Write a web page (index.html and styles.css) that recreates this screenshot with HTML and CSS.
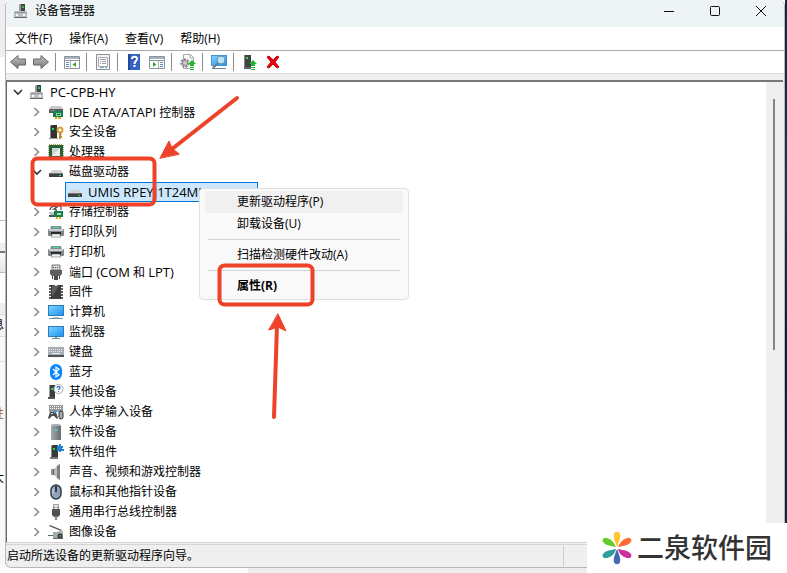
FILE: index.html
```html
<!DOCTYPE html>
<html lang="zh-CN">
<head>
  <meta charset="utf-8">
  <title>设备管理器</title>
  <link rel="stylesheet" href="styles.css">
</head>
<body>
  <!-- icon sprite, 16x16 grid -->
  <svg class="sprite" aria-hidden="true">
    <defs>
      <linearGradient id="g-screen" x1="0" y1="0" x2="1" y2="1"><stop offset="0" stop-color="#7fd0ff"/><stop offset="1" stop-color="#1e96f0"/></linearGradient>
      <linearGradient id="g-gray" x1="0" y1="0" x2="0" y2="1"><stop offset="0" stop-color="#c4c4c4"/><stop offset="1" stop-color="#767676"/></linearGradient>
      <linearGradient id="g-metal" x1="0" y1="0" x2="1" y2="0"><stop offset="0" stop-color="#a4a9ad"/><stop offset="1" stop-color="#666c70"/></linearGradient>
    </defs>
    <symbol id="i-down" viewBox="0 0 16 16"><path d="M4 6l4 4 4-4" fill="none" stroke="#333" stroke-width="1.6"/></symbol>
    <symbol id="i-right" viewBox="0 0 16 16"><path d="M5.500 4l4 4-4 4" fill="none" stroke="#888" stroke-width="1.5"/></symbol>
    <symbol id="i-computer" viewBox="0 0 16 16">
      <path d="M6 2l2-1h4v8H6z" fill="#444"/><path d="M6 2l2-1v8H6z" fill="#999"/><path d="M9 3h2v2H9z" fill="#19d13a"/>
      <path d="M2 8h11l1 2v5H1v-5z" fill="#b9bcc0"/><path d="M1 9h13v1H1z" fill="#999"/><path d="M3 11h2v2H3zM10 11h2v2h-2z" fill="#fff"/><path d="M1 14h13v1H1z" fill="#666"/>
    </symbol>
    <symbol id="i-ide" viewBox="0 0 16 16">
      <path d="M3 2h10l2 3H1z" fill="#c6c8ca"/><path d="M1 5h14v4H1z" fill="#5a5d60"/><path d="M2 6h5v1H2z" fill="#888"/>
      <path d="M5 7h10v6H5z" fill="#16804b"/><path d="M8 9h5v3H8z" fill="#92d7ad"/><path d="M9 10h3v1H9z" fill="#14512e"/><path d="M7 13h2v2H7zM10 13h3v2h-3z" fill="#e5a923"/>
    </symbol>
    <symbol id="i-security" viewBox="0 0 16 16">
      <path d="M2 2l2-1h5v13H2z" fill="#333"/><path d="M2 2l1-1v13H2z" fill="#888"/><path d="M4 4h2v2H4z" fill="#1ee04a"/><path d="M1 14h9v1H1z" fill="#999"/>
      <circle cx="12" cy="6" r="2.500" fill="none" stroke="#d5a13b" stroke-width="2"/><path d="M11 8h2v7h-2zM13 10h1v1h-1zM13 12h1v2h-1z" fill="#c58d29"/>
    </symbol>
    <symbol id="i-cpu" viewBox="0 0 16 16">
      <path d="M1 1h14v14H1z" fill="none" stroke="#b99b3c" stroke-width="2" stroke-dasharray="1 1"/><path d="M1 1h14v14H1z" fill="#236440"/><path d="M4 4h8v8H4z" fill="#cdd3d0"/><path d="M4 12l8-8v8z" fill="#eef0ef"/>
    </symbol>
    <symbol id="i-disk" viewBox="0 0 16 16">
      <path d="M4 6h9l2 3H2z" fill="#d2d3d4"/><path d="M1 9h14v4H1z" fill="#3f4143"/><path d="M1 9h14v1H1z" fill="#777"/><path d="M11 11h2v1h-2z" fill="#26e055"/>
    </symbol>
    <symbol id="i-storage" viewBox="0 0 16 16">
      <path d="M2 6c0-3 4-5 7-3L6 5c3 0 3 3 0 4" fill="none" stroke="#555" stroke-width="1.500"/><path d="M9 2h4v4" fill="none" stroke="#777" stroke-width="1.500"/>
      <path d="M1 8h7l1 4H2z" fill="#bfc2c4"/><path d="M1 11h6v2H1z" fill="#555"/>
      <path d="M6 7h9v6H6z" fill="#16804b"/><path d="M9 9h4v2H9z" fill="#a5debb"/><path d="M8 13h2v2H8zM11 13h2v2h-2z" fill="#e5a923"/>
    </symbol>
    <symbol id="i-printer" viewBox="0 0 16 16">
      <path d="M3 2h10l1 4H2z" fill="#858b90"/><path d="M5 3h6v1H5z" fill="#3ee2a5"/><rect x="0" y="5" width="16" height="7" rx="1" fill="#7e858b"/><path d="M1 5h14v2H1z" fill="#c7ccd0"/>
      <path d="M3 8h10v3H3z" fill="#242628"/><path d="M4 10h8l1 3H3z" fill="#f2f3f4" stroke="#555" stroke-width=".5"/>
    </symbol>
    <symbol id="i-port" viewBox="0 0 16 16">
      <path d="M4 1h8v5H4z" fill="#d8d8d8" stroke="#777"/><path d="M5 3h1v1H5zM7 3h1v1H7zM9 3h1v1H9z" fill="#555"/><path d="M2 6h12v4l-2 2H4l-2-2z" fill="#5e6062"/><path d="M4 12h1v3H4zM6 12h4v4H6zM11 12h1v3h-1z" fill="#4a4c4e"/>
    </symbol>
    <symbol id="i-firmware" viewBox="0 0 16 16">
      <path d="M2 1v14M14 1v14" stroke="#5b5b5b" stroke-width="2" stroke-dasharray="2 1"/><path d="M3 1h3l2 1 2-1h3v14H3z" fill="#3c3e40"/><path d="M4 2h7L4 12z" fill="#5d6062"/>
    </symbol>
    <symbol id="i-pc" viewBox="0 0 16 16"><path d="M0 1h16v11H0z" fill="#2c7cba"/><path d="M1 2h14v9H1z" fill="url(#g-screen)"/><path d="M5 13h6v1H5z" fill="#bbb"/><path d="M1 14h14v1H1z" fill="#7796a6"/></symbol>
    <symbol id="i-monitor" viewBox="0 0 16 16"><path d="M0 2h16v11H0z" fill="#2c7cba"/><path d="M1 3h14v9H1z" fill="url(#g-screen)"/><path d="M7 13h2v1H7zM4 14h8v1H4z" fill="#6f93a8"/></symbol>
    <symbol id="i-keyboard" viewBox="0 0 16 16">
      <path d="M0 3h16v8H0z" fill="#a6acb1"/><path d="M1 5.500h14M1 7.500h14" stroke="#eef0f1" stroke-dasharray="1 1"/><path d="M4 9h8v1H4z" fill="#eef0f1"/><path d="M0 11h16v2H0z" fill="#4f5356"/>
    </symbol>
    <symbol id="i-bluetooth" viewBox="0 0 16 16"><rect x="2" y="0" width="12" height="16" rx="6" fill="#0a84ff"/><path d="M5 5l6 6-3 2V3l3 2-6 6" fill="none" stroke="#fff" stroke-width="1.200"/></symbol>
    <symbol id="i-other" viewBox="0 0 16 16">
      <path d="M1 2l1-1h5v12H1z" fill="#3b3d3f"/><path d="M1 2l1-1v12H1z" fill="#999"/><path d="M3 4h2v2H3z" fill="#1ee04a"/><path d="M0 13h7v2H0z" fill="#555"/>
      <circle cx="10.500" cy="5" r="4.500" fill="#fff" stroke="#aaa"/><path d="M9 4c0-2 3-2 3 0 0 1-1.500 1-1.500 2" fill="none" stroke="#2676c8" stroke-width="1.300"/><path d="M10 7h1v1h-1z" fill="#2676c8"/>
    </symbol>
    <symbol id="i-hid" viewBox="0 0 16 16">
      <path d="M1 1h14v7H1z" fill="#969a9e"/><path d="M2 2.500h12M2 4.500h12" stroke="#fff" stroke-dasharray="1 1"/>
      <path d="M0 14l2-6h6l2 6-1 1-3-3H4l-3 3z" fill="#4a4e53"/><path d="M3 9h2v1H3z" fill="#ddd"/><path d="M6 6h2v3H6z" fill="#2a9de5"/><rect x="11" y="7" width="4" height="8" rx="2" fill="#a4a9ae" stroke="#333"/>
    </symbol>
    <symbol id="i-software" viewBox="0 0 16 16"><path d="M3 2l1-1h8l1 1v14H3z" fill="url(#g-metal)"/><path d="M4 0h8l1 2H3z" fill="#aeb5ba"/><path d="M7 5h2v2H7z" fill="#3bd5e8"/></symbol>
    <symbol id="i-component" viewBox="0 0 16 16">
      <path d="M3 2l2-1h5v12H3z" fill="#38393b"/><path d="M3 2l1-1v12H3z" fill="#888"/><path d="M5 4h2v2H5z" fill="#1ee04a"/><path d="M2 13h8v2H2z" fill="#777"/>
      <path d="M9 2h2V0h2v2h2v2h-1v1h2v2h-3v1h-2V7H9z" fill="#1f83d2"/>
    </symbol>
    <symbol id="i-sound" viewBox="0 0 16 16"><path d="M3 5h3v6H3z" fill="#999"/><path d="M6 5l5-5v16l-5-5z" fill="#b9bdc0"/><path d="M9 2l3-2v16l-3-2z" fill="#7b8084"/><path d="M5 5h1v6H5z" fill="#555"/></symbol>
    <symbol id="i-mouse" viewBox="0 0 16 16"><rect x="3" y="1" width="10" height="14" rx="5" fill="#8fa3b8" stroke="#333a42" stroke-width="1.500"/><path d="M8 2v6" stroke="#333a42" stroke-width="2"/><path d="M5 5v5" stroke="#dae4ee"/></symbol>
    <symbol id="i-usb" viewBox="0 0 16 16"><path d="M5.500.500h5v5h-5z" fill="#e2e2e2" stroke="#999"/><path d="M6 3h1v1H6zM9 3h1v1H9z" fill="#555"/><path d="M4 5h8v6l-2 2H6l-2-2z" fill="#505255"/><path d="M7 12h2v4H7z" fill="#888"/></symbol>
    <symbol id="i-imaging" viewBox="0 0 16 16">
      <path d="M2 1l12 5-1 1L1 2z" fill="#555"/><path d="M6 9l8-3 1 2-5 2z" fill="#bbb"/><path d="M5 8h10v7H5z" fill="#a6aaad"/><path d="M0 11h5v1H0z" fill="#666"/><circle cx="12" cy="12" r="2.500" fill="#333"/><circle cx="12" cy="12" r="1" fill="#48b98b"/><path d="M5 14h10v1H5z" fill="#666"/>
    </symbol>
    <!-- toolbar -->
    <symbol id="i-back" viewBox="0 0 16 16"><path d="M.500 8L8 1.500V5h7.500v6H8v3.500z" fill="url(#g-gray)" stroke="#666"/></symbol>
    <symbol id="i-forward" viewBox="0 0 16 16"><path d="M15.500 8L8 1.500V5H.500v6H8v3.500z" fill="url(#g-gray)" stroke="#666"/></symbol>
    <symbol id="i-tree" viewBox="0 0 16 16">
      <path d="M.500 2.500h15v12H.500z" fill="#fff" stroke="#8b949c"/><path d="M1 3h14v2H1z" fill="#a9b3bc"/><path d="M1 6h14v1H1z" fill="#8b949c"/><path d="M6 7h1v7H6z" fill="#aaa"/><path d="M2 8h3v1H2zM2 10h3v1H2zM2 12h3v1H2z" fill="#5a8abc"/><path d="M12 8v5L8.500 10.500z" fill="#2daa2d"/>
    </symbol>
    <symbol id="i-props" viewBox="0 0 16 16">
      <path d="M1.500.500h13v15h-13z" fill="#f4f4f4" stroke="#8f8f8f"/><path d="M3.500 3.500h9v9h-9z" fill="#fff" stroke="#aaa"/><path d="M5 5h6v1H5zM7 7h4v1H7zM7 9h4v1H7zM5 7h1v1H5zM5 9h1v1H5z" fill="#99a"/><path d="M5 13h4v1H5z" fill="#4bb7da"/><path d="M10 13h2v1h-2z" fill="#999"/>
    </symbol>
    <symbol id="i-help" viewBox="0 0 16 16"><path d="M2 0h12v16H2z" fill="#3761c4"/><path d="M2 0h2v16H2z" fill="#23479d"/><path d="M6 5c0-3 5-3 5 0 0 2-2.500 2-2.500 5" fill="none" stroke="#fff" stroke-width="2"/><path d="M7.500 11h2v2h-2z" fill="#fff"/></symbol>
    <symbol id="i-action" viewBox="0 0 16 16">
      <path d="M.500 2.500h15v12H.500z" fill="#fff" stroke="#8b949c"/><path d="M1 3h14v2H1z" fill="#a9b3bc"/><path d="M1 6h14v1H1z" fill="#8b949c"/><path d="M9 7h1v7H9z" fill="#aaa"/><path d="M11 8h3v1h-3zM11 10h3v1h-3zM11 12h3v1h-3z" fill="#5a8abc"/><path d="M4 8v5l3.500-2.500z" fill="#2daa2d"/>
    </symbol>
    <symbol id="i-update" viewBox="0 0 16 16">
      <path d="M3.500.500h7l3 3v11h-10z" fill="#fafafa" stroke="#aaa"/><path d="M10 0v4h4" fill="none" stroke="#aaa"/><circle cx="5" cy="9" r="3.500" fill="none" stroke="#8a8a8a" stroke-width="2.500" stroke-dasharray="2 1"/><circle cx="5" cy="9" r="2.500" fill="#ccc" stroke="#888"/>
      <path d="M12 6l4 4h-2v6h-4v-6H8z" fill="#21b532"/><path d="M10 12h4v1h-4zM10 14h4v1h-4z" fill="#fff"/>
    </symbol>
    <symbol id="i-scan" viewBox="0 0 16 16">
      <path d="M0 1h16v11H0z" fill="#4a93c9"/><path d="M1 2h14v9H1z" fill="url(#g-screen)"/><path d="M1 14h14v1H1z" fill="#789"/><circle cx="10" cy="6" r="4" fill="#b5e4fa" stroke="#6e8ea3"/><path d="M7 9l-5 5" stroke="#667c8c" stroke-width="2"/>
    </symbol>
    <symbol id="i-install" viewBox="0 0 16 16">
      <path d="M2 1h7v12H2z" fill="#404244"/><path d="M2 1h1v12H2z" fill="#888"/><path d="M4 3h2v2H4z" fill="#1ee04a"/><path d="M2 13h7v2H2z" fill="#666"/><path d="M11 6l4 4h-2v6H9v-6H7z" fill="#21b532"/><path d="M9 12h4v1H9zM9 14h4v1H9z" fill="#fff"/>
    </symbol>
    <symbol id="i-remove" viewBox="0 0 16 16"><path d="M2 3l2-1 4 4 4-4 2 1-4 5 4 5-2 1-4-4-4 4-2-1 4-5z" fill="#e3000f" stroke="#d2000d"/></symbol>
  </svg>

  <div class="desktop">
    <!-- slices of the windows behind -->
    <div class="behind-left" aria-hidden="true">
      <div class="slice slice-top"></div>
      <div class="slice slice-page"></div>
      <div class="slice slice-gap"></div>
      <div class="slice slice-tab"></div>
      <div class="slice slice-page short"></div>
      <div class="slice slice-row"><span>息</span></div>
      <div class="slice slice-row blank"></div>
      <div class="slice slice-text"><span class="warm">性</span></div>
      <div class="slice slice-text"><span>大</span></div>
      <div class="slice slice-rest"></div>
    </div>

    <main class="window">
      <header class="titlebar">
        <svg class="icon"><use href="#i-computer"/></svg>
        <h1>设备管理器</h1>
        <div class="window-buttons">
          <button aria-label="最小化"><svg viewBox="0 0 12 12"><path d="M1 6.500h10"/></svg></button>
          <button aria-label="最大化"><svg viewBox="0 0 12 12"><rect x="1.500" y="1.500" width="9" height="9" rx="1"/></svg></button>
          <button aria-label="关闭"><svg viewBox="0 0 12 12"><path d="M1 1l10 10M11 1L1 11"/></svg></button>
        </div>
      </header>

      <nav class="menubar">
        <button>文件(F)</button>
        <button>操作(A)</button>
        <button>查看(V)</button>
        <button>帮助(H)</button>
      </nav>

      <div class="toolbar">
        <button aria-label="后退"><svg class="icon"><use href="#i-back"/></svg></button>
        <button aria-label="前进"><svg class="icon"><use href="#i-forward"/></svg></button>
        <span class="divider"></span>
        <button aria-label="显示控制台树"><svg class="icon"><use href="#i-tree"/></svg></button>
        <span class="divider"></span>
        <button aria-label="属性"><svg class="icon"><use href="#i-props"/></svg></button>
        <span class="divider"></span>
        <button aria-label="帮助"><svg class="icon"><use href="#i-help"/></svg></button>
        <button aria-label="操作窗格"><svg class="icon"><use href="#i-action"/></svg></button>
        <span class="divider"></span>
        <button aria-label="更新驱动程序"><svg class="icon"><use href="#i-update"/></svg></button>
        <span class="divider"></span>
        <button aria-label="扫描检测硬件改动"><svg class="icon"><use href="#i-scan"/></svg></button>
        <span class="divider"></span>
        <button aria-label="启用设备"><svg class="icon"><use href="#i-install"/></svg></button>
        <button aria-label="卸载设备"><svg class="icon"><use href="#i-remove"/></svg></button>
      </div>

      <div class="pane">
        <ul class="tree">
          <li>
            <div class="row"><button class="toggle" aria-label="折叠"><svg class="icon"><use href="#i-down"/></svg></button><span class="label"><svg class="icon"><use href="#i-computer"/></svg><span class="latin">PC-CPB-HY</span></span></div>
            <ul>
              <li class="row"><button class="toggle" aria-label="展开"><svg class="icon"><use href="#i-right"/></svg></button><span class="label"><svg class="icon"><use href="#i-ide"/></svg><span><span class="latin">IDE ATA/ATAPI</span> 控制器</span></span></li>
              <li class="row"><button class="toggle" aria-label="展开"><svg class="icon"><use href="#i-right"/></svg></button><span class="label"><svg class="icon"><use href="#i-security"/></svg>安全设备</span></li>
              <li class="row"><button class="toggle" aria-label="展开"><svg class="icon"><use href="#i-right"/></svg></button><span class="label"><svg class="icon"><use href="#i-cpu"/></svg>处理器</span></li>
              <li>
                <div class="row"><button class="toggle" aria-label="折叠"><svg class="icon"><use href="#i-down"/></svg></button><span class="label"><svg class="icon"><use href="#i-disk"/></svg>磁盘驱动器</span></div>
                <ul>
                  <li class="row leaf"><span class="label selected"><svg class="icon"><use href="#i-disk"/></svg><span class="latin">UMIS RPEYJ1T24MLDAVWG</span></span></li>
                </ul>
              </li>
              <li class="row"><button class="toggle" aria-label="展开"><svg class="icon"><use href="#i-right"/></svg></button><span class="label"><svg class="icon"><use href="#i-storage"/></svg>存储控制器</span></li>
              <li class="row"><button class="toggle" aria-label="展开"><svg class="icon"><use href="#i-right"/></svg></button><span class="label"><svg class="icon"><use href="#i-printer"/></svg>打印队列</span></li>
              <li class="row"><button class="toggle" aria-label="展开"><svg class="icon"><use href="#i-right"/></svg></button><span class="label"><svg class="icon"><use href="#i-printer"/></svg>打印机</span></li>
              <li class="row"><button class="toggle" aria-label="展开"><svg class="icon"><use href="#i-right"/></svg></button><span class="label"><svg class="icon"><use href="#i-port"/></svg><span>端口 <span class="latin">(COM</span> 和 <span class="latin">LPT)</span></span></span></li>
              <li class="row"><button class="toggle" aria-label="展开"><svg class="icon"><use href="#i-right"/></svg></button><span class="label"><svg class="icon"><use href="#i-firmware"/></svg>固件</span></li>
              <li class="row"><button class="toggle" aria-label="展开"><svg class="icon"><use href="#i-right"/></svg></button><span class="label"><svg class="icon"><use href="#i-pc"/></svg>计算机</span></li>
              <li class="row"><button class="toggle" aria-label="展开"><svg class="icon"><use href="#i-right"/></svg></button><span class="label"><svg class="icon"><use href="#i-monitor"/></svg>监视器</span></li>
              <li class="row"><button class="toggle" aria-label="展开"><svg class="icon"><use href="#i-right"/></svg></button><span class="label"><svg class="icon"><use href="#i-keyboard"/></svg>键盘</span></li>
              <li class="row"><button class="toggle" aria-label="展开"><svg class="icon"><use href="#i-right"/></svg></button><span class="label"><svg class="icon"><use href="#i-bluetooth"/></svg>蓝牙</span></li>
              <li class="row"><button class="toggle" aria-label="展开"><svg class="icon"><use href="#i-right"/></svg></button><span class="label"><svg class="icon"><use href="#i-other"/></svg>其他设备</span></li>
              <li class="row"><button class="toggle" aria-label="展开"><svg class="icon"><use href="#i-right"/></svg></button><span class="label"><svg class="icon"><use href="#i-hid"/></svg>人体学输入设备</span></li>
              <li class="row"><button class="toggle" aria-label="展开"><svg class="icon"><use href="#i-right"/></svg></button><span class="label"><svg class="icon"><use href="#i-software"/></svg>软件设备</span></li>
              <li class="row"><button class="toggle" aria-label="展开"><svg class="icon"><use href="#i-right"/></svg></button><span class="label"><svg class="icon"><use href="#i-component"/></svg>软件组件</span></li>
              <li class="row"><button class="toggle" aria-label="展开"><svg class="icon"><use href="#i-right"/></svg></button><span class="label"><svg class="icon"><use href="#i-sound"/></svg>声音、视频和游戏控制器</span></li>
              <li class="row"><button class="toggle" aria-label="展开"><svg class="icon"><use href="#i-right"/></svg></button><span class="label"><svg class="icon"><use href="#i-mouse"/></svg>鼠标和其他指针设备</span></li>
              <li class="row"><button class="toggle" aria-label="展开"><svg class="icon"><use href="#i-right"/></svg></button><span class="label"><svg class="icon"><use href="#i-usb"/></svg>通用串行总线控制器</span></li>
              <li class="row"><button class="toggle" aria-label="展开"><svg class="icon"><use href="#i-right"/></svg></button><span class="label"><svg class="icon"><use href="#i-imaging"/></svg>图像设备</span></li>
            </ul>
          </li>
        </ul>
        <div class="scrollbar"><div class="thumb"></div></div>
      </div>

      <footer class="statusbar">
        <span class="status-text">启动所选设备的更新驱动程序向导。</span>
        <span class="status-cell"></span>
      </footer>
    </main>

    <div class="behind-right" aria-hidden="true"></div>
  </div>

  <div class="context-menu">
    <button class="active">更新驱动程序(P)</button>
    <button>卸载设备(U)</button>
    <hr>
    <button>扫描检测硬件改动(A)</button>
    <hr>
    <button class="default">属性(R)</button>
  </div>

  <!-- red marks over the window -->
  <svg class="marks" width="420" height="430" viewBox="0 0 420 430" aria-hidden="true">
    <rect x="32.500" y="158.500" width="122" height="46" rx="5"/>
    <rect x="219.500" y="265.500" width="93" height="39" rx="5"/>
    <path d="M237 98L172 149"/>
    <path class="head" d="M160 158l9-17 3 7 7 6z"/>
    <path d="M274 417l3-92"/>
    <path class="head" d="M278 314l8 17-8-4-9 3z"/>
  </svg>

  <div class="watermark">
    <svg class="flower" viewBox="0 0 30 34" aria-hidden="true">
      <path d="M15 16C13 10 11 7 12 3c1-3 5-3 6 0 1 4-1 7-3 13z" fill="#ffc52c"/>
      <path d="M16 16c2-5 5-8 9-9 4-1 6 3 3 5-3 3-8 3-12 4z" fill="#ff6a36"/>
      <path d="M14 16C10 15 5 15 2 12-1 10 1 6 5 7c4 1 7 4 9 9z" fill="#67cb2d"/>
      <path d="M14 18c-1 5-5 8-9 9-4 1-6-3-3-5 3-3 8-3 12-4z" fill="#2f9d98"/>
      <path d="M16 18c4 1 9 1 12 4 3 2 1 6-3 5-4-1-8-4-9-9z" fill="#cc309b"/>
      <path d="M15 18c2 6 4 9 3 13-1 3-5 3-6 0-1-4 1-7 3-13z" fill="#4568b2"/>
    </svg>
    <span>二泉软件园</span>
  </div>
</body>
</html>
```

FILE: styles.css
```css
* {
  box-sizing: border-box;
}

body {
  margin: 0;
  height: 100vh;
  overflow: hidden;
  position: relative;
  background: #fff;
  color: #000;
  font-family: "Open Sans", "Noto Sans CJK SC", sans-serif;
  font-size: 12px;
  line-height: 20px;
}

button {
  margin: 0;
  padding: 0;
  border: none;
  background: none;
  color: inherit;
  font: inherit;
}

ul {
  margin: 0;
  padding: 0;
  list-style: none;
}

.sprite {
  position: absolute;
  width: 0;
  height: 0;
}

.icon {
  display: block;
  width: 16px;
  height: 16px;
  flex: none;
}

.latin {
  font-size: 13px;
}

.desktop {
  display: grid;
  grid-template-columns: 5px 1fr 2px;
  height: 100vh;
  background: linear-gradient(#eee, #eee) 248px 100% / 100% 5px no-repeat;
}

/* windows behind */
.behind-left {
  display: flex;
  flex-direction: column;
  overflow: hidden;
}

.slice {
  overflow: hidden;
  flex: none;
}

.slice span {
  display: block;
  width: 12px;
  margin-left: -8px;
}

.slice-top {
  height: 57px;
  background: #eee;
}

.slice-page {
  height: 164px;
  background: #fff;
  border-bottom: 1px solid #bbb;
}

.slice-gap {
  height: 32px;
  border-bottom: 2px solid #777;
  background: linear-gradient(#fff 22px, #eee 22px);
}

.slice-tab {
  height: 20px;
  background: linear-gradient(#fafafa, #e6e6e6);
  border-bottom: 1px solid #bbb;
}

.slice-page.short {
  height: 42px;
  border-color: #ddd;
  background: linear-gradient(#fff 30px, #eee 30px);
}

.slice-row {
  height: 22px;
  background: #f4f4f6;
  border-bottom: 1px solid #ddd;
}

.slice-row.blank {
  height: 25px;
  background: #f8f8f8;
}

.slice-text {
  height: 64px;
  padding-top: 42px;
  background: #f8f8f8;
}

.slice-rest {
  height: 78px;
  background: #f8f8f8;
}

.warm {
  color: #a85a00;
}

.behind-right {
  background: linear-gradient(#14263a, #1c3450 35%, #0e1c30 60%, #16293f);
}

/* main window */
.window {
  display: flex;
  flex-direction: column;
  min-width: 0;
  margin-bottom: 5px;
  overflow: hidden;
  background: #efefef;
  border: 1px solid #b8b8b8;
  border-top: none;
  border-radius: 6px;
}

.titlebar {
  display: flex;
  align-items: center;
  height: 27px;
  padding: 0 0 5px 7px;
  gap: 6px;
  background: #eef3f6;
}

.titlebar h1 {
  flex: 1;
  margin: 0;
  font-size: 12px;
  font-weight: normal;
}

.window-buttons {
  display: flex;
}

.window-buttons button {
  display: flex;
  justify-content: center;
  width: 46px;
}

.window-buttons svg {
  width: 12px;
  height: 12px;
  fill: none;
  stroke: #111;
}

.menubar {
  display: flex;
  gap: 1px;
  height: 24px;
  padding: 1px 0 0 1px;
  background: #fff;
  border-bottom: 1px solid #aaa;
}

.menubar button {
  padding: 0 8px;
}

.toolbar {
  display: flex;
  align-items: center;
  gap: 1px;
  height: 23px;
  padding-left: 1px;
  background: #fff;
  border-bottom: 1px solid #d8d8d8;
}

.toolbar button {
  display: flex;
  justify-content: center;
  width: 22px;
}

.divider {
  width: 1px;
  height: 18px;
  margin: 0 4px 0 2px;
  background: #8c8c8c;
}

.pane {
  display: flex;
  flex: 1;
  min-height: 0;
  margin: 6px 1px 0 0;
  border-top: 2px solid #777;
  border-left: 1px solid #696969;
  border-bottom: 1px solid #d5d5d5;
  background: #fff;
}

.tree {
  flex: 1;
  padding-left: 3px;
  overflow: hidden;
}

.tree ul {
  padding-left: 19px;
}

.row {
  display: flex;
  height: 20px;
}

.row.leaf {
  padding-left: 17px;
}

.toggle {
  display: flex;
  align-items: center;
  width: 16px;
}

.label {
  display: flex;
  align-items: center;
  gap: 5px;
  padding: 0 5px 0 3px;
  white-space: nowrap;
}

.selected {
  padding-left: 1px;
  border: 1px solid #0078d7;
  background: #cce8ff;
}

.scrollbar {
  width: 17px;
  padding: 17px 7px;
  background: #efefef;
}

.thumb {
  width: 2px;
  height: 59%;
  background: #858585;
}

.statusbar {
  display: flex;
  height: 23px;
  margin-top: 1px;
  border-top: 1px solid #d5d5d5;
}

.status-text {
  flex: 1;
  padding: 1px 0 0 1px;
}

.status-cell {
  width: 221px;
  margin: 1px 0;
  border-left: 1px solid #ccc;
}

/* popup */
.context-menu {
  position: absolute;
  left: 199px;
  top: 188px;
  display: flex;
  flex-direction: column;
  width: 210px;
  padding: 2px 5px;
  background: #f9f9f9;
  border: 1px solid #e0e0e0;
  border-radius: 4px;
}

.context-menu button {
  height: 22px;
  padding-left: 32px;
  text-align: left;
  border-radius: 3px;
}

.context-menu .active {
  background: #f0f0f0;
}

.context-menu .default {
  font-weight: bold;
}

.context-menu hr {
  width: calc(100% - 6px);
  height: 1px;
  margin: 4px 3px;
  border: none;
  background: #d4d4d4;
}

.marks {
  position: absolute;
  left: 0;
  top: 0;
  fill: none;
  stroke: #ee4229;
  stroke-width: 4;
  stroke-linecap: round;
  pointer-events: none;
}

.marks .head {
  fill: #ee4229;
  stroke-width: 1;
}

.watermark {
  position: absolute;
  right: 0;
  bottom: 0;
  display: flex;
  align-items: center;
  gap: 5px;
  width: 200px;
  height: 50px;
  padding-left: 15px;
  background: #fff;
  color: #333;
  font-size: 27px;
  font-weight: 500;
  white-space: nowrap;
}

.flower {
  width: 30px;
  height: 34px;
}
```
